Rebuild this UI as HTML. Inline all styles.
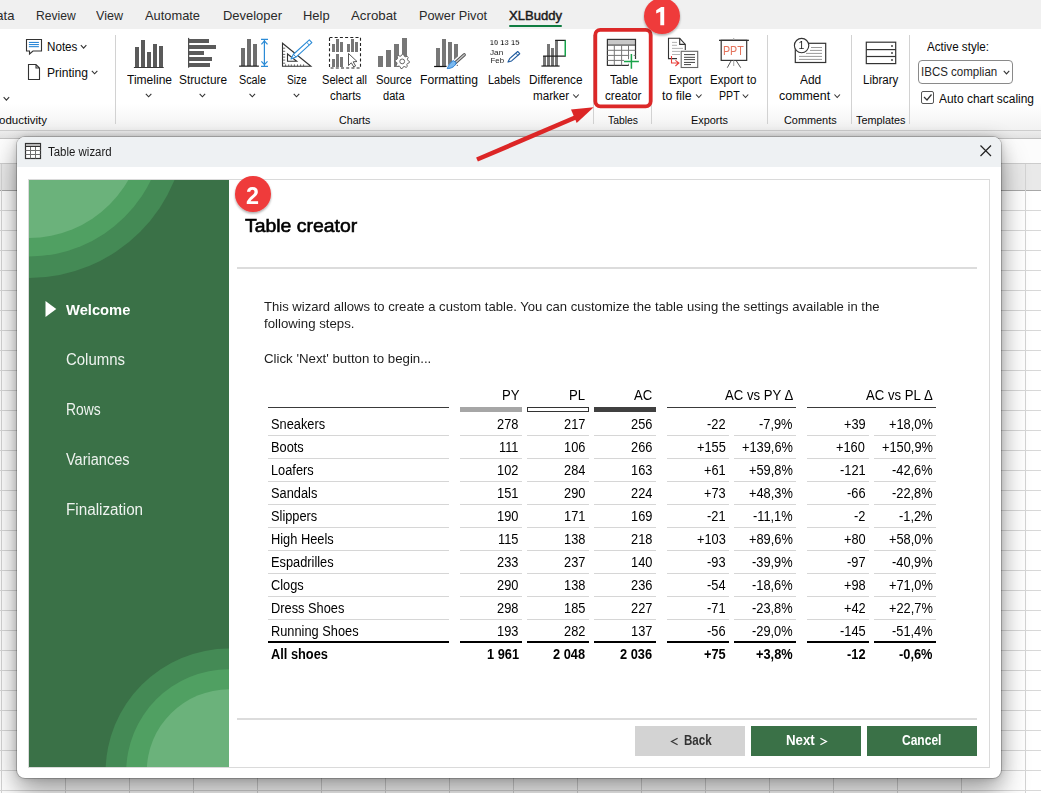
<!DOCTYPE html><html><head><meta charset="utf-8"><style>
html,body{margin:0;padding:0;}
body{width:1041px;height:793px;overflow:hidden;position:relative;background:#fff;font-family:"Liberation Sans",sans-serif;}
.t{position:absolute;white-space:nowrap;transform-origin:0 0;}
.a{position:absolute;}
</style></head><body>
<svg class="a" style="left:0;top:0" width="1041" height="793"><defs><linearGradient id="bandg" x1="0" y1="0" x2="0" y2="1"><stop offset="0" stop-color="#eeeeee"/><stop offset="1" stop-color="#e2e2e2"/></linearGradient></defs><rect x="0" y="130" width="1041" height="8" fill="url(#bandg)"/><rect x="0" y="130" width="1041" height="1" fill="#cdcdcd"/><rect x="0" y="138" width="1041" height="1" fill="#c0c0c0"/><rect x="0" y="139" width="1041" height="24" fill="#fcfcfc"/><rect x="0" y="163" width="1041" height="27" fill="#e9e9e9"/><rect x="0" y="163" width="1041" height="1" fill="#cccccc"/><rect x="0" y="190" width="1041" height="1" fill="#a8a8a8"/><rect x="1" y="164" width="1" height="629" fill="#d4d4d4"/><rect x="65" y="164" width="1" height="629" fill="#d4d4d4"/><rect x="129" y="164" width="1" height="629" fill="#d4d4d4"/><rect x="193" y="164" width="1" height="629" fill="#d4d4d4"/><rect x="257" y="164" width="1" height="629" fill="#d4d4d4"/><rect x="321" y="164" width="1" height="629" fill="#d4d4d4"/><rect x="385" y="164" width="1" height="629" fill="#d4d4d4"/><rect x="449" y="164" width="1" height="629" fill="#d4d4d4"/><rect x="513" y="164" width="1" height="629" fill="#d4d4d4"/><rect x="577" y="164" width="1" height="629" fill="#d4d4d4"/><rect x="641" y="164" width="1" height="629" fill="#d4d4d4"/><rect x="705" y="164" width="1" height="629" fill="#d4d4d4"/><rect x="769" y="164" width="1" height="629" fill="#d4d4d4"/><rect x="833" y="164" width="1" height="629" fill="#d4d4d4"/><rect x="897" y="164" width="1" height="629" fill="#d4d4d4"/><rect x="961" y="164" width="1" height="629" fill="#d4d4d4"/><rect x="1025" y="164" width="1" height="629" fill="#d4d4d4"/><rect x="0" y="210" width="1041" height="1" fill="#d8d8d8"/><rect x="0" y="230" width="1041" height="1" fill="#d8d8d8"/><rect x="0" y="250" width="1041" height="1" fill="#d8d8d8"/><rect x="0" y="270" width="1041" height="1" fill="#d8d8d8"/><rect x="0" y="290" width="1041" height="1" fill="#d8d8d8"/><rect x="0" y="310" width="1041" height="1" fill="#d8d8d8"/><rect x="0" y="330" width="1041" height="1" fill="#d8d8d8"/><rect x="0" y="350" width="1041" height="1" fill="#d8d8d8"/><rect x="0" y="370" width="1041" height="1" fill="#d8d8d8"/><rect x="0" y="390" width="1041" height="1" fill="#d8d8d8"/><rect x="0" y="410" width="1041" height="1" fill="#d8d8d8"/><rect x="0" y="430" width="1041" height="1" fill="#d8d8d8"/><rect x="0" y="450" width="1041" height="1" fill="#d8d8d8"/><rect x="0" y="470" width="1041" height="1" fill="#d8d8d8"/><rect x="0" y="490" width="1041" height="1" fill="#d8d8d8"/><rect x="0" y="510" width="1041" height="1" fill="#d8d8d8"/><rect x="0" y="530" width="1041" height="1" fill="#d8d8d8"/><rect x="0" y="550" width="1041" height="1" fill="#d8d8d8"/><rect x="0" y="570" width="1041" height="1" fill="#d8d8d8"/><rect x="0" y="590" width="1041" height="1" fill="#d8d8d8"/><rect x="0" y="610" width="1041" height="1" fill="#d8d8d8"/><rect x="0" y="630" width="1041" height="1" fill="#d8d8d8"/><rect x="0" y="650" width="1041" height="1" fill="#d8d8d8"/><rect x="0" y="670" width="1041" height="1" fill="#d8d8d8"/><rect x="0" y="690" width="1041" height="1" fill="#d8d8d8"/><rect x="0" y="710" width="1041" height="1" fill="#d8d8d8"/><rect x="0" y="730" width="1041" height="1" fill="#d8d8d8"/><rect x="0" y="750" width="1041" height="1" fill="#d8d8d8"/><rect x="0" y="770" width="1041" height="1" fill="#d8d8d8"/><rect x="0" y="790" width="1041" height="1" fill="#d8d8d8"/></svg>
<div class="a" style="left:0;top:0;width:1041px;height:29px;background:#f0f0f0"></div>
<div class="t" style="left:-13.10px;top:9px;font-size:13px;line-height:13px;color:#2a2a2a;">Data</div>
<div class="t" style="left:36.00px;top:9px;font-size:13px;line-height:13px;color:#2a2a2a;transform:scaleX(0.9321);">Review</div>
<div class="t" style="left:96.00px;top:9px;font-size:13px;line-height:13px;color:#2a2a2a;transform:scaleX(0.9643);">View</div>
<div class="t" style="left:145.00px;top:9px;font-size:13px;line-height:13px;color:#2a2a2a;transform:scaleX(0.9883);">Automate</div>
<div class="t" style="left:223.00px;top:9px;font-size:13px;line-height:13px;color:#2a2a2a;transform:scaleX(0.9958);">Developer</div>
<div class="t" style="left:303.00px;top:9px;font-size:13px;line-height:13px;color:#2a2a2a;transform:scaleX(0.9944);">Help</div>
<div class="t" style="left:351.00px;top:9px;font-size:13px;line-height:13px;color:#2a2a2a;transform:scaleX(1.0201);">Acrobat</div>
<div class="t" style="left:419.00px;top:9px;font-size:13px;line-height:13px;color:#2a2a2a;transform:scaleX(0.9805);">Power Pivot</div>
<div class="t" style="left:509.00px;top:9px;font-size:13px;line-height:13px;color:#1a1a1a;transform:scaleX(1.0047);-webkit-text-stroke:0.45px #1a1a1a;">XLBuddy</div>
<div class="a" style="left:509px;top:25px;width:53px;height:2px;background:#107c41;border-radius:1px"></div>
<div class="a" style="left:0;top:29px;width:1041px;height:101px;background:linear-gradient(#fff 0px,#fff 75px,#f2f2f2 101px)"></div>
<div class="a" style="left:115px;top:35px;width:1px;height:89px;background:#d2d2d2"></div>
<div class="a" style="left:593px;top:35px;width:1px;height:89px;background:#d2d2d2"></div>
<div class="a" style="left:651px;top:35px;width:1px;height:89px;background:#d2d2d2"></div>
<div class="a" style="left:767px;top:35px;width:1px;height:89px;background:#d2d2d2"></div>
<div class="a" style="left:851px;top:35px;width:1px;height:89px;background:#d2d2d2"></div>
<div class="a" style="left:909px;top:35px;width:1px;height:89px;background:#d2d2d2"></div>
<div class="t" style="left:-12.45px;top:115px;font-size:11.5px;line-height:11.5px;color:#0a0a0a;">Productivity</div>
<div class="t" style="left:338.80px;top:115px;font-size:11.5px;line-height:11.5px;color:#0a0a0a;transform:scaleX(0.9276);">Charts</div>
<div class="t" style="left:607.50px;top:115px;font-size:11.5px;line-height:11.5px;color:#0a0a0a;transform:scaleX(0.9023);">Tables</div>
<div class="t" style="left:691.40px;top:115px;font-size:11.5px;line-height:11.5px;color:#0a0a0a;transform:scaleX(0.9487);">Exports</div>
<div class="t" style="left:783.70px;top:115px;font-size:11.5px;line-height:11.5px;color:#0a0a0a;transform:scaleX(0.9460);">Comments</div>
<div class="t" style="left:856.05px;top:115px;font-size:11.5px;line-height:11.5px;color:#0a0a0a;transform:scaleX(0.9447);">Templates</div>
<div class="t" style="left:46.60px;top:41px;font-size:12.5px;line-height:12.5px;color:#0a0a0a;transform:scaleX(0.9311);">Notes</div>
<div class="t" style="left:46.60px;top:67px;font-size:12.5px;line-height:12.5px;color:#0a0a0a;transform:scaleX(0.9670);">Printing</div>
<div class="t" style="left:127.00px;top:74px;font-size:12.5px;line-height:12.5px;color:#0a0a0a;transform:scaleX(0.9626);">Timeline</div>
<div class="t" style="left:179.00px;top:74px;font-size:12.5px;line-height:12.5px;color:#0a0a0a;transform:scaleX(0.9467);">Structure</div>
<div class="t" style="left:238.80px;top:74px;font-size:12.5px;line-height:12.5px;color:#0a0a0a;transform:scaleX(0.8640);">Scale</div>
<div class="t" style="left:287.05px;top:74px;font-size:12.5px;line-height:12.5px;color:#0a0a0a;transform:scaleX(0.8107);">Size</div>
<div class="t" style="left:322.30px;top:74px;font-size:12.5px;line-height:12.5px;color:#0a0a0a;transform:scaleX(0.8876);">Select all</div>
<div class="t" style="left:329.70px;top:90px;font-size:12.5px;line-height:12.5px;color:#0a0a0a;transform:scaleX(0.9104);">charts</div>
<div class="t" style="left:376.35px;top:74px;font-size:12.5px;line-height:12.5px;color:#0a0a0a;transform:scaleX(0.9015);">Source</div>
<div class="t" style="left:382.80px;top:90px;font-size:12.5px;line-height:12.5px;color:#0a0a0a;transform:scaleX(0.8852);">data</div>
<div class="t" style="left:419.50px;top:74px;font-size:12.5px;line-height:12.5px;color:#0a0a0a;transform:scaleX(0.9707);">Formatting</div>
<div class="t" style="left:487.55px;top:74px;font-size:12.5px;line-height:12.5px;color:#0a0a0a;transform:scaleX(0.8765);">Labels</div>
<div class="t" style="left:529.45px;top:74px;font-size:12.5px;line-height:12.5px;color:#0a0a0a;transform:scaleX(0.9427);">Difference</div>
<div class="t" style="left:532.60px;top:90px;font-size:12.5px;line-height:12.5px;color:#0a0a0a;transform:scaleX(0.9306);">marker</div>
<div class="t" style="left:609.50px;top:74px;font-size:12.5px;line-height:12.5px;color:#0a0a0a;transform:scaleX(0.9365);">Table</div>
<div class="t" style="left:604.60px;top:90px;font-size:12.5px;line-height:12.5px;color:#0a0a0a;transform:scaleX(0.9357);">creator</div>
<div class="t" style="left:668.60px;top:74px;font-size:12.5px;line-height:12.5px;color:#0a0a0a;transform:scaleX(0.9018);">Export</div>
<div class="t" style="left:662.20px;top:90px;font-size:12.5px;line-height:12.5px;color:#0a0a0a;transform:scaleX(0.9900);">to file</div>
<div class="t" style="left:710.35px;top:74px;font-size:12.5px;line-height:12.5px;color:#0a0a0a;transform:scaleX(0.9260);">Export to</div>
<div class="t" style="left:718.80px;top:90px;font-size:12.5px;line-height:12.5px;color:#0a0a0a;transform:scaleX(0.8477);">PPT</div>
<div class="t" style="left:800.30px;top:74px;font-size:12.5px;line-height:12.5px;color:#0a0a0a;transform:scaleX(0.9528);">Add</div>
<div class="t" style="left:778.70px;top:90px;font-size:12.5px;line-height:12.5px;color:#0a0a0a;transform:scaleX(0.9942);">comment</div>
<div class="t" style="left:863.35px;top:74px;font-size:12.5px;line-height:12.5px;color:#0a0a0a;transform:scaleX(0.9241);">Library</div>
<div class="t" style="left:927.20px;top:41px;font-size:12.5px;line-height:12.5px;color:#0a0a0a;transform:scaleX(0.9295);">Active style:</div>
<div class="a" style="left:918px;top:60px;width:93px;height:22px;border:1px solid #8a8a8a;border-radius:4px;background:#fff"></div>
<div class="t" style="left:921.30px;top:66px;font-size:12.5px;line-height:12.5px;color:#262626;transform:scaleX(0.9220);">IBCS complian</div>
<div class="a" style="left:921px;top:91px;width:11px;height:11px;border:1px solid #555;border-radius:2px;background:#fff"></div>
<div class="t" style="left:939.20px;top:93px;font-size:12.5px;line-height:12.5px;color:#0a0a0a;transform:scaleX(0.9562);">Auto chart scaling</div>
<svg class="a" style="left:0;top:0;will-change:transform" width="1041" height="130"><path d="M80.85,45.1 L83.6,48.1 L86.35,45.1" fill="none" stroke="#333" stroke-width="1.1"/><path d="M91.85,70.8 L94.6,73.8 L97.35,70.8" fill="none" stroke="#333" stroke-width="1.1"/><path d="M3.6500000000000004,97.2 L6.4,100.2 L9.15,97.2" fill="none" stroke="#333" stroke-width="1.1"/><path d="M145.85,93.8 L148.6,96.8 L151.35,93.8" fill="none" stroke="#333" stroke-width="1.1"/><path d="M199.65,93.8 L202.4,96.8 L205.15,93.8" fill="none" stroke="#333" stroke-width="1.1"/><path d="M249.55,93.8 L252.3,96.8 L255.05,93.8" fill="none" stroke="#333" stroke-width="1.1"/><path d="M293.75,93.8 L296.5,96.8 L299.25,93.8" fill="none" stroke="#333" stroke-width="1.1"/><path d="M573.25,94.5 L576,97.5 L578.75,94.5" fill="none" stroke="#333" stroke-width="1.1"/><path d="M696.05,94.5 L698.8,97.5 L701.55,94.5" fill="none" stroke="#333" stroke-width="1.1"/><path d="M742.75,94.5 L745.5,97.5 L748.25,94.5" fill="none" stroke="#333" stroke-width="1.1"/><path d="M834.45,94.5 L837.2,97.5 L839.95,94.5" fill="none" stroke="#333" stroke-width="1.1"/><path d="M1003.75,70.9 L1006.5,73.9 L1009.25,70.9" fill="none" stroke="#333" stroke-width="1.1"/><path d="M924,97 L927,100 L931.5,94.5" fill="none" stroke="#333" stroke-width="1.2"/><path d="M26.5,39.5 H41.5 V51 H33 L29.5,54 V51 H26.5 Z" fill="#fff" stroke="#333" stroke-width="1.1"/><rect x="28.9" y="41.9" width="10" height="1.1" fill="#2b88d8"/><rect x="28.9" y="44.0" width="10" height="1.1" fill="#2b88d8"/><rect x="28.9" y="46.1" width="10" height="1.1" fill="#2b88d8"/><path d="M28.5,64.5 H36 L39.5,68 V79.5 H28.5 Z M36,64.5 V68 H39.5" fill="#fff" stroke="#333" stroke-width="1.1"/><rect x="135" y="47" width="4" height="21" fill="#5a5a5a"/><rect x="141" y="40" width="4" height="28" fill="#5a5a5a"/><rect x="147" y="52" width="4" height="16" fill="#5a5a5a"/><rect x="153" y="44" width="4" height="24" fill="#5a5a5a"/><rect x="159" y="46" width="4" height="22" fill="#5a5a5a"/><rect x="133.9" y="67" width="29.8" height="1" fill="#3a3a3a"/><rect x="188.1" y="37.9" width="1.1" height="29.8" fill="#3a3a3a"/><rect x="189" y="39" width="20" height="4" fill="#5a5a5a"/><rect x="189" y="45" width="27" height="4" fill="#5a5a5a"/><rect x="189" y="51" width="15" height="4" fill="#5a5a5a"/><rect x="189" y="57" width="23" height="4" fill="#5a5a5a"/><rect x="189" y="63" width="21" height="4" fill="#5a5a5a"/><rect x="241" y="48" width="4" height="18" fill="#6e6e6e"/><rect x="247" y="39" width="4" height="27" fill="#6e6e6e"/><rect x="253" y="44" width="4" height="22" fill="#6e6e6e"/><rect x="239.1" y="65.6" width="19.8" height="1.1" fill="#111"/><path d="M264.4,40 V66 M261,39.4 H268 M261,66.3 H268 M261.4,44.4 L264.4,40.9 L267.5,44.4 M261.4,61.3 L264.4,64.7 L267.5,61.3" fill="none" stroke="#2b8bd6" stroke-width="1.2"/><path d="M282.5,43.2 V66.3 H310.9 Z" fill="#fff" stroke="#333" stroke-width="1.1" stroke-linejoin="miter"/><path d="M287.5,54 V61.3 H296.7 Z" fill="none" stroke="#333" stroke-width="1.1"/><path d="M282.5,48.2 H285.2" stroke="#444" stroke-width="0.8"/><path d="M282.5,51.3 H285.2" stroke="#444" stroke-width="0.8"/><path d="M282.5,54.4 H285.2" stroke="#444" stroke-width="0.8"/><path d="M282.5,57.1 H285.2" stroke="#444" stroke-width="0.8"/><path d="M282.5,60.1 H285.2" stroke="#444" stroke-width="0.8"/><path d="M282.5,63.2 H285.2" stroke="#444" stroke-width="0.8"/><path d="M285.6,66.3 V64.4" stroke="#444" stroke-width="0.8"/><path d="M288.7,66.3 V64.4" stroke="#444" stroke-width="0.8"/><path d="M291.3,66.3 V64.4" stroke="#444" stroke-width="0.8"/><path d="M294.4,66.3 V64.4" stroke="#444" stroke-width="0.8"/><path d="M297.5,66.3 V64.4" stroke="#444" stroke-width="0.8"/><path d="M300.6,66.3 V64.4" stroke="#444" stroke-width="0.8"/><path d="M303.6,66.3 V64.4" stroke="#444" stroke-width="0.8"/><polygon points="291.00,59.00 295.98,57.06 311.87,42.71 309.33,39.89 293.44,54.24" fill="#fff" stroke="#2b8bd6" stroke-width="1.1" stroke-linejoin="round"/><path d="M309.28,45.06 L306.73,42.24 M295.98,57.06 L293.44,54.24" stroke="#2b8bd6" stroke-width="1"/><rect x="329.5" y="37.5" width="31" height="30.5" fill="none" stroke="#222" stroke-width="1.1" stroke-dasharray="3,2.2"/><rect x="332" y="44" width="3" height="8" fill="#777"/><rect x="336" y="39" width="3" height="13" fill="#777"/><rect x="340" y="42" width="3" height="10" fill="#777"/><rect x="347" y="44" width="3" height="8" fill="#777"/><rect x="351" y="39" width="3" height="13" fill="#777"/><rect x="355" y="42" width="3" height="10" fill="#777"/><rect x="332" y="59" width="3" height="8" fill="#777"/><rect x="336" y="54" width="3" height="13" fill="#777"/><rect x="340" y="57" width="3" height="10" fill="#777"/><path d="M348.5,53.5 L348.5,65.5 L351.3,62.8 L353.8,67 L355.6,66 L353.2,61.8 L357,61.5 Z" fill="#fff" stroke="#444" stroke-width="0.9"/><rect x="378" y="56" width="5" height="11" fill="#777"/><rect x="386" y="50" width="5" height="17" fill="#777"/><rect x="394" y="44" width="5" height="23" fill="#777"/><rect x="402" y="38" width="5" height="29" fill="#777"/><polygon points="409.40,61.40 409.26,62.80 407.37,63.54 406.86,64.51 407.29,66.49 406.20,67.39 404.34,66.57 403.29,66.89 402.20,68.60 400.80,68.46 400.06,66.57 399.09,66.06 397.11,66.49 396.21,65.40 397.03,63.54 396.71,62.49 395.00,61.40 395.14,60.00 397.03,59.26 397.54,58.29 397.11,56.31 398.20,55.41 400.06,56.23 401.11,55.91 402.20,54.20 403.60,54.34 404.34,56.23 405.31,56.74 407.29,56.31 408.19,57.40 407.37,59.26 407.69,60.31" fill="#fff" stroke="#666" stroke-width="1"/><circle cx="402.2" cy="61.4" r="2.4" fill="#fff" stroke="#666" stroke-width="1"/><rect x="436" y="48" width="4" height="18" fill="#777"/><rect x="442" y="39" width="4" height="27" fill="#777"/><rect x="448" y="42" width="4" height="24" fill="#777"/><rect x="454" y="44" width="4" height="22" fill="#777"/><rect x="434.1" y="65.9" width="14" height="1.2" fill="#111"/><path d="M468,51.5 L446,71" stroke="#fff" stroke-width="6"/><path d="M464.3,54.8 L455.6,62.5" stroke="#555" stroke-width="3.2" stroke-linecap="round"/><path d="M464.3,54.8 L455.6,62.5" stroke="#c8c8c8" stroke-width="1.3" stroke-linecap="round"/><path d="M456.2,62.5 C455.6,66.2 451.5,68.6 447.2,68.6 C448.6,65.8 450,62.4 453.2,60.6 Z" fill="#7ab8ee" stroke="#1f77d0" stroke-width="0.9"/><text x="489.8" y="44.6" font-family="Liberation Sans" font-weight="bold" font-size="7.3" textLength="29.6" lengthAdjust="spacingAndGlyphs" fill="#000" stroke="#fff" stroke-width="0.25">10 13 15</text><text x="490" y="54.7" font-family="Liberation Sans" font-size="7.4" textLength="13.2" lengthAdjust="spacingAndGlyphs" fill="#222">Jan</text><text x="490.6" y="63.4" font-family="Liberation Sans" font-size="7" textLength="13.4" lengthAdjust="spacingAndGlyphs" fill="#222">Feb</text><polygon points="508.00,62.10 511.61,60.90 519.70,53.72 517.70,51.48 509.62,58.65" fill="#fff" stroke="#1f5a9e" stroke-width="1.1" stroke-linejoin="round"/><path d="M517.83,55.38 L515.83,53.14" stroke="#1f5a9e" stroke-width="0.9"/><rect x="543" y="56" width="3" height="10" fill="#777"/><rect x="547" y="44" width="3" height="22" fill="#777"/><rect x="551" y="48" width="3" height="18" fill="#777"/><rect x="555" y="40" width="3" height="26" fill="#777"/><rect x="541.4" y="65.5" width="18.2" height="1.1" fill="#111"/><path d="M543.1,56.1 H565.8 M555.2,40.4 H565.8" fill="none" stroke="#222" stroke-width="1.1"/><rect x="564.5" y="40.4" width="1.5" height="15.7" fill="#16a34a"/><rect x="607.4" y="39.4" width="28.1" height="5.6" fill="#c8c8c8"/><rect x="607.4" y="39.4" width="28.1" height="26" fill="none" stroke="#333" stroke-width="1.2"/><rect x="607.4" y="44.6" width="28.1" height="1" fill="#333"/><rect x="613.8" y="45" width="1" height="20.4" fill="#777"/><rect x="621.1" y="45" width="1" height="20.4" fill="#777"/><rect x="628.0" y="45" width="1" height="20.4" fill="#777"/><rect x="607.4" y="49.8" width="28.1" height="1" fill="#777"/><rect x="607.4" y="54.9" width="28.1" height="1" fill="#777"/><rect x="607.4" y="59.9" width="28.1" height="1" fill="#777"/><rect x="628.9" y="59" width="8" height="8" fill="#fff"/><path d="M631.4,54.1 V68.7 M624,61.4 H638.9" stroke="#fff" stroke-width="4.5"/><path d="M631.4,54.1 V68.7 M624,61.4 H638.9" stroke="#1aa34a" stroke-width="1.5"/><path d="M677,58.6 H668.5 V38.3 H679.7 L685.3,44.4 V50" fill="none" stroke="#333" stroke-width="1.1"/><path d="M679.7,38.3 V44.4 H685.3" fill="none" stroke="#333" stroke-width="1.1"/><rect x="672" y="41.9" width="5" height="1" fill="#b4b4b4"/><rect x="672" y="44.8" width="5" height="1" fill="#b4b4b4"/><rect x="672" y="47.9" width="11" height="1" fill="#b4b4b4"/><rect x="672" y="50.9" width="8" height="1" fill="#b4b4b4"/><rect x="672" y="54.0" width="8" height="1" fill="#b4b4b4"/><rect x="681.2" y="51.3" width="16.5" height="16.2" fill="#fff" stroke="#666" stroke-width="1.1"/><rect x="684" y="54.0" width="11" height="1.1" fill="#555"/><rect x="684" y="56.8" width="11" height="1.1" fill="#555"/><rect x="684" y="59.0" width="11" height="1.1" fill="#555"/><rect x="684" y="61.9" width="11" height="1.1" fill="#555"/><rect x="684" y="64.0" width="7" height="1.1" fill="#555"/><path d="M671.5,56 V63 H678.9 M675.4,60.4 L678.9,63 L675.4,66" fill="none" stroke="#e8413c" stroke-width="1.1"/><rect x="721.2" y="40.3" width="25.5" height="20.1" fill="#fff" stroke="#333" stroke-width="1.2"/><rect x="719" y="39.7" width="29.9" height="1.3" fill="#333"/><path d="M733.7,38 V40 M733.7,60.4 V66" stroke="#aaa" stroke-width="1.1"/><path d="M731.1,60.8 L727.3,67.7 M736.3,60.8 L740.7,67.7" stroke="#444" stroke-width="0.9"/><text x="722.9" y="55.2" font-family="Liberation Sans" font-size="13" textLength="20.8" lengthAdjust="spacingAndGlyphs" fill="#e4735c">PPT</text><rect x="795.3" y="43.3" width="30.4" height="19.2" fill="#fff" stroke="#333" stroke-width="1.2"/><rect x="811" y="47.0" width="11" height="1" fill="#9a9a9a"/><rect x="810" y="49.9" width="12" height="1" fill="#9a9a9a"/><rect x="806" y="52.9" width="16" height="1" fill="#9a9a9a"/><rect x="799" y="55.9" width="23" height="1" fill="#9a9a9a"/><rect x="799" y="58.9" width="23" height="1" fill="#9a9a9a"/><circle cx="801.6" cy="45.6" r="7.2" fill="#fff" stroke="#333" stroke-width="1.1"/><text x="801.4" y="49.4" font-family="Liberation Sans" font-size="10.5" text-anchor="middle" fill="#222">1</text><rect x="866.3" y="42.2" width="29.4" height="21.4" fill="#fff" stroke="#333" stroke-width="1.2"/><rect x="866.3" y="49" width="29.4" height="1.2" fill="#333"/><rect x="866.3" y="55.9" width="29.4" height="1.2" fill="#333"/><rect x="891.1" y="45.1" width="1.8" height="1.8" fill="#555"/><rect x="891.1" y="52.1" width="1.8" height="1.8" fill="#555"/><rect x="891.1" y="59.1" width="1.8" height="1.8" fill="#555"/></svg>
<div class="a" style="left:17px;top:137px;width:984px;height:641px;border-radius:8px;box-shadow:0 18px 30px rgba(0,0,0,0.30),0 2px 20px rgba(0,0,0,0.18),0 0 7px rgba(0,0,0,0.14),0 0 0 1px rgba(0,0,0,0.2);background:#fff;overflow:hidden"><div class="a" style="left:0;top:0;width:984px;height:30px;background:#eef1f3"></div></div>
<svg class="a" style="left:0;top:130px" width="1041" height="40"><rect x="25.5" y="13.5" width="15" height="15" fill="#fff" stroke="#333" stroke-width="1.2"/><rect x="26" y="14" width="14" height="2.2" fill="#b8b8b8"/><path d="M30.5,16.5 V28.5 M35.5,16.5 V28.5 M25.5,20.5 H40.5 M25.5,24.5 H40.5" stroke="#707070" stroke-width="1"/><path d="M25.5,16.5 H40.5" stroke="#333" stroke-width="1"/><path d="M980.5,15.5 L991,26 M991,15.5 L980.5,26" stroke="#222" stroke-width="1.2"/></svg>
<div class="t" style="left:47.60px;top:146px;font-size:12.5px;line-height:12.5px;color:#1a1a1a;transform:scaleX(0.9165);">Table wizard</div>
<div class="a" style="left:28px;top:179px;width:960px;height:587px;border:1px solid #dadada"></div>
<svg class="a" style="left:29px;top:180px" width="200" height="587">
<defs><clipPath id="gc"><rect x="0" y="0" width="200" height="587"/></clipPath></defs>
<g clip-path="url(#gc)">
<rect x="0" y="0" width="200" height="587" fill="#3a7147"/>
<circle cx="0" cy="-59" r="157" fill="#448a55"/>
<circle cx="0" cy="-59" r="135.5" fill="#50a062"/>
<circle cx="0" cy="-56" r="114" fill="#6bb27b"/>
<circle cx="200" cy="592" r="123.4" fill="#448a55"/>
<circle cx="200" cy="592" r="102.8" fill="#50a062"/>
<circle cx="200" cy="591.5" r="82.2" fill="#6bb27b"/>
</g></svg>
<svg class="a" style="left:45px;top:300px" width="13" height="18"><path d="M0.5,0.9 L11.3,9 L0.5,17.1 Z" fill="#fff"/></svg>
<div class="t" style="left:66.40px;top:302px;font-size:15px;line-height:15px;font-weight:bold;color:#ffffff;transform:scaleX(0.9817);">Welcome</div>
<div class="t" style="left:66.30px;top:352px;font-size:16px;line-height:16px;color:#eef3ef;transform:scaleX(0.9343);">Columns</div>
<div class="t" style="left:66.30px;top:402px;font-size:16px;line-height:16px;color:#eef3ef;transform:scaleX(0.8675);">Rows</div>
<div class="t" style="left:66.30px;top:452px;font-size:16px;line-height:16px;color:#eef3ef;transform:scaleX(0.9078);">Variances</div>
<div class="t" style="left:66.30px;top:502px;font-size:16px;line-height:16px;color:#eef3ef;transform:scaleX(0.9524);">Finalization</div>
<div class="t" style="left:245.40px;top:216px;font-size:19px;line-height:19px;color:#000;transform:scaleX(1.0214);-webkit-text-stroke:0.6px #000;">Table creator</div>
<div class="a" style="left:237px;top:267px;width:740px;height:2px;background:#dcdcdc"></div>
<div class="t" style="left:263.60px;top:300px;font-size:13px;line-height:13px;color:#1e1e1e;transform:scaleX(1.0056);">This wizard allows to create a custom table. You can customize the table using the settings available in the</div>
<div class="t" style="left:263.60px;top:317px;font-size:13px;line-height:13px;color:#1e1e1e;transform:scaleX(1.0180);">following steps.</div>
<div class="t" style="left:263.60px;top:352px;font-size:13px;line-height:13px;color:#1e1e1e;transform:scaleX(1.0204);">Click &#x27;Next&#x27; button to begin...</div>
<svg class="a" style="left:0;top:0" width="1041" height="793"><rect x="268" y="407" width="181" height="1" fill="#3a3a3a"/><rect x="667" y="407" width="129" height="1" fill="#3a3a3a"/><rect x="807" y="407" width="129" height="1" fill="#3a3a3a"/><rect x="460" y="407" width="62" height="5" fill="#a6a6a6"/><rect x="527.5" y="407.5" width="61" height="4" fill="#fff" stroke="#333" stroke-width="1"/><rect x="594" y="407" width="62" height="5" fill="#404040"/><rect x="268" y="435" width="181" height="1" fill="#d6d6d6"/><rect x="460" y="435" width="62" height="1" fill="#d6d6d6"/><rect x="527" y="435" width="62" height="1" fill="#d6d6d6"/><rect x="594" y="435" width="62" height="1" fill="#d6d6d6"/><rect x="667" y="435" width="62" height="1" fill="#d6d6d6"/><rect x="734" y="435" width="62" height="1" fill="#d6d6d6"/><rect x="807" y="435" width="62" height="1" fill="#d6d6d6"/><rect x="874" y="435" width="62" height="1" fill="#d6d6d6"/><rect x="268" y="458" width="181" height="1" fill="#d6d6d6"/><rect x="460" y="458" width="62" height="1" fill="#d6d6d6"/><rect x="527" y="458" width="62" height="1" fill="#d6d6d6"/><rect x="594" y="458" width="62" height="1" fill="#d6d6d6"/><rect x="667" y="458" width="62" height="1" fill="#d6d6d6"/><rect x="734" y="458" width="62" height="1" fill="#d6d6d6"/><rect x="807" y="458" width="62" height="1" fill="#d6d6d6"/><rect x="874" y="458" width="62" height="1" fill="#d6d6d6"/><rect x="268" y="481" width="181" height="1" fill="#d6d6d6"/><rect x="460" y="481" width="62" height="1" fill="#d6d6d6"/><rect x="527" y="481" width="62" height="1" fill="#d6d6d6"/><rect x="594" y="481" width="62" height="1" fill="#d6d6d6"/><rect x="667" y="481" width="62" height="1" fill="#d6d6d6"/><rect x="734" y="481" width="62" height="1" fill="#d6d6d6"/><rect x="807" y="481" width="62" height="1" fill="#d6d6d6"/><rect x="874" y="481" width="62" height="1" fill="#d6d6d6"/><rect x="268" y="504" width="181" height="1" fill="#d6d6d6"/><rect x="460" y="504" width="62" height="1" fill="#d6d6d6"/><rect x="527" y="504" width="62" height="1" fill="#d6d6d6"/><rect x="594" y="504" width="62" height="1" fill="#d6d6d6"/><rect x="667" y="504" width="62" height="1" fill="#d6d6d6"/><rect x="734" y="504" width="62" height="1" fill="#d6d6d6"/><rect x="807" y="504" width="62" height="1" fill="#d6d6d6"/><rect x="874" y="504" width="62" height="1" fill="#d6d6d6"/><rect x="268" y="527" width="181" height="1" fill="#d6d6d6"/><rect x="460" y="527" width="62" height="1" fill="#d6d6d6"/><rect x="527" y="527" width="62" height="1" fill="#d6d6d6"/><rect x="594" y="527" width="62" height="1" fill="#d6d6d6"/><rect x="667" y="527" width="62" height="1" fill="#d6d6d6"/><rect x="734" y="527" width="62" height="1" fill="#d6d6d6"/><rect x="807" y="527" width="62" height="1" fill="#d6d6d6"/><rect x="874" y="527" width="62" height="1" fill="#d6d6d6"/><rect x="268" y="550" width="181" height="1" fill="#d6d6d6"/><rect x="460" y="550" width="62" height="1" fill="#d6d6d6"/><rect x="527" y="550" width="62" height="1" fill="#d6d6d6"/><rect x="594" y="550" width="62" height="1" fill="#d6d6d6"/><rect x="667" y="550" width="62" height="1" fill="#d6d6d6"/><rect x="734" y="550" width="62" height="1" fill="#d6d6d6"/><rect x="807" y="550" width="62" height="1" fill="#d6d6d6"/><rect x="874" y="550" width="62" height="1" fill="#d6d6d6"/><rect x="268" y="573" width="181" height="1" fill="#d6d6d6"/><rect x="460" y="573" width="62" height="1" fill="#d6d6d6"/><rect x="527" y="573" width="62" height="1" fill="#d6d6d6"/><rect x="594" y="573" width="62" height="1" fill="#d6d6d6"/><rect x="667" y="573" width="62" height="1" fill="#d6d6d6"/><rect x="734" y="573" width="62" height="1" fill="#d6d6d6"/><rect x="807" y="573" width="62" height="1" fill="#d6d6d6"/><rect x="874" y="573" width="62" height="1" fill="#d6d6d6"/><rect x="268" y="596" width="181" height="1" fill="#d6d6d6"/><rect x="460" y="596" width="62" height="1" fill="#d6d6d6"/><rect x="527" y="596" width="62" height="1" fill="#d6d6d6"/><rect x="594" y="596" width="62" height="1" fill="#d6d6d6"/><rect x="667" y="596" width="62" height="1" fill="#d6d6d6"/><rect x="734" y="596" width="62" height="1" fill="#d6d6d6"/><rect x="807" y="596" width="62" height="1" fill="#d6d6d6"/><rect x="874" y="596" width="62" height="1" fill="#d6d6d6"/><rect x="268" y="619" width="181" height="1" fill="#d6d6d6"/><rect x="460" y="619" width="62" height="1" fill="#d6d6d6"/><rect x="527" y="619" width="62" height="1" fill="#d6d6d6"/><rect x="594" y="619" width="62" height="1" fill="#d6d6d6"/><rect x="667" y="619" width="62" height="1" fill="#d6d6d6"/><rect x="734" y="619" width="62" height="1" fill="#d6d6d6"/><rect x="807" y="619" width="62" height="1" fill="#d6d6d6"/><rect x="874" y="619" width="62" height="1" fill="#d6d6d6"/><rect x="268" y="641" width="181" height="2" fill="#000"/><rect x="460" y="641" width="62" height="2" fill="#000"/><rect x="527" y="641" width="62" height="2" fill="#000"/><rect x="594" y="641" width="62" height="2" fill="#000"/><rect x="667" y="641" width="62" height="2" fill="#000"/><rect x="734" y="641" width="62" height="2" fill="#000"/><rect x="807" y="641" width="62" height="2" fill="#000"/><rect x="874" y="641" width="62" height="2" fill="#000"/></svg>
<div class="t" style="left:501.58px;top:388px;font-size:14px;line-height:14px;color:#000;transform:scaleX(0.9371);">PY</div>
<div class="t" style="left:569.14px;top:388px;font-size:14px;line-height:14px;color:#000;transform:scaleX(0.9391);">PL</div>
<div class="t" style="left:634.27px;top:388px;font-size:14px;line-height:14px;color:#000;transform:scaleX(0.9373);">AC</div>
<div class="t" style="left:724.52px;top:388px;font-size:14px;line-height:14px;color:#000;transform:scaleX(0.9380);">AC vs PY Δ</div>
<div class="t" style="left:866.34px;top:388px;font-size:14px;line-height:14px;color:#000;transform:scaleX(0.9382);">AC vs PL Δ</div>
<div class="t" style="left:270.60px;top:417px;font-size:14px;line-height:14px;color:#000;transform:scaleX(0.9142);">Sneakers</div>
<div class="t" style="left:497.33px;top:417px;font-size:14px;line-height:14px;color:#000;transform:scaleX(0.9154);">278</div>
<div class="t" style="left:563.83px;top:417px;font-size:14px;line-height:14px;color:#000;transform:scaleX(0.9154);">217</div>
<div class="t" style="left:631.03px;top:417px;font-size:14px;line-height:14px;color:#000;transform:scaleX(0.9154);">256</div>
<div class="t" style="left:707.48px;top:417px;font-size:14px;line-height:14px;color:#000;transform:scaleX(0.9145);">-22</div>
<div class="t" style="left:759.06px;top:417px;font-size:14px;line-height:14px;color:#000;transform:scaleX(0.9149);">-7,9%</div>
<div class="t" style="left:843.58px;top:417px;font-size:14px;line-height:14px;color:#000;transform:scaleX(0.9145);">+39</div>
<div class="t" style="left:888.72px;top:417px;font-size:14px;line-height:14px;color:#000;transform:scaleX(0.9150);">+18,0%</div>
<div class="t" style="left:270.60px;top:440px;font-size:14px;line-height:14px;color:#000;transform:scaleX(0.9148);">Boots</div>
<div class="t" style="left:499.25px;top:440px;font-size:14px;line-height:14px;color:#000;transform:scaleX(0.9133);">111</div>
<div class="t" style="left:563.83px;top:440px;font-size:14px;line-height:14px;color:#000;transform:scaleX(0.9154);">106</div>
<div class="t" style="left:631.03px;top:440px;font-size:14px;line-height:14px;color:#000;transform:scaleX(0.9154);">266</div>
<div class="t" style="left:697.14px;top:440px;font-size:14px;line-height:14px;color:#000;transform:scaleX(0.9148);">+155</div>
<div class="t" style="left:741.58px;top:440px;font-size:14px;line-height:14px;color:#000;transform:scaleX(0.9151);">+139,6%</div>
<div class="t" style="left:836.44px;top:440px;font-size:14px;line-height:14px;color:#000;transform:scaleX(0.9148);">+160</div>
<div class="t" style="left:881.58px;top:440px;font-size:14px;line-height:14px;color:#000;transform:scaleX(0.9151);">+150,9%</div>
<div class="t" style="left:270.60px;top:463px;font-size:14px;line-height:14px;color:#000;transform:scaleX(0.9143);">Loafers</div>
<div class="t" style="left:497.33px;top:463px;font-size:14px;line-height:14px;color:#000;transform:scaleX(0.9154);">102</div>
<div class="t" style="left:563.83px;top:463px;font-size:14px;line-height:14px;color:#000;transform:scaleX(0.9154);">284</div>
<div class="t" style="left:631.03px;top:463px;font-size:14px;line-height:14px;color:#000;transform:scaleX(0.9154);">163</div>
<div class="t" style="left:704.28px;top:463px;font-size:14px;line-height:14px;color:#000;transform:scaleX(0.9145);">+61</div>
<div class="t" style="left:748.72px;top:463px;font-size:14px;line-height:14px;color:#000;transform:scaleX(0.9150);">+59,8%</div>
<div class="t" style="left:839.69px;top:463px;font-size:14px;line-height:14px;color:#000;transform:scaleX(0.9146);">-121</div>
<div class="t" style="left:891.92px;top:463px;font-size:14px;line-height:14px;color:#000;transform:scaleX(0.9150);">-42,6%</div>
<div class="t" style="left:270.60px;top:486px;font-size:14px;line-height:14px;color:#000;transform:scaleX(0.9149);">Sandals</div>
<div class="t" style="left:497.33px;top:486px;font-size:14px;line-height:14px;color:#000;transform:scaleX(0.9154);">151</div>
<div class="t" style="left:563.83px;top:486px;font-size:14px;line-height:14px;color:#000;transform:scaleX(0.9154);">290</div>
<div class="t" style="left:631.03px;top:486px;font-size:14px;line-height:14px;color:#000;transform:scaleX(0.9154);">224</div>
<div class="t" style="left:704.28px;top:486px;font-size:14px;line-height:14px;color:#000;transform:scaleX(0.9145);">+73</div>
<div class="t" style="left:748.72px;top:486px;font-size:14px;line-height:14px;color:#000;transform:scaleX(0.9150);">+48,3%</div>
<div class="t" style="left:846.78px;top:486px;font-size:14px;line-height:14px;color:#000;transform:scaleX(0.9145);">-66</div>
<div class="t" style="left:891.92px;top:486px;font-size:14px;line-height:14px;color:#000;transform:scaleX(0.9150);">-22,8%</div>
<div class="t" style="left:270.60px;top:509px;font-size:14px;line-height:14px;color:#000;transform:scaleX(0.9139);">Slippers</div>
<div class="t" style="left:497.33px;top:509px;font-size:14px;line-height:14px;color:#000;transform:scaleX(0.9154);">190</div>
<div class="t" style="left:563.83px;top:509px;font-size:14px;line-height:14px;color:#000;transform:scaleX(0.9154);">171</div>
<div class="t" style="left:631.03px;top:509px;font-size:14px;line-height:14px;color:#000;transform:scaleX(0.9154);">169</div>
<div class="t" style="left:707.48px;top:509px;font-size:14px;line-height:14px;color:#000;transform:scaleX(0.9145);">-21</div>
<div class="t" style="left:752.90px;top:509px;font-size:14px;line-height:14px;color:#000;transform:scaleX(0.9145);">-11,1%</div>
<div class="t" style="left:853.92px;top:509px;font-size:14px;line-height:14px;color:#000;transform:scaleX(0.9138);">-2</div>
<div class="t" style="left:899.06px;top:509px;font-size:14px;line-height:14px;color:#000;transform:scaleX(0.9149);">-1,2%</div>
<div class="t" style="left:270.60px;top:532px;font-size:14px;line-height:14px;color:#000;transform:scaleX(0.9152);">High Heels</div>
<div class="t" style="left:498.31px;top:532px;font-size:14px;line-height:14px;color:#000;transform:scaleX(0.9143);">115</div>
<div class="t" style="left:563.83px;top:532px;font-size:14px;line-height:14px;color:#000;transform:scaleX(0.9154);">138</div>
<div class="t" style="left:631.03px;top:532px;font-size:14px;line-height:14px;color:#000;transform:scaleX(0.9154);">218</div>
<div class="t" style="left:697.14px;top:532px;font-size:14px;line-height:14px;color:#000;transform:scaleX(0.9148);">+103</div>
<div class="t" style="left:748.72px;top:532px;font-size:14px;line-height:14px;color:#000;transform:scaleX(0.9150);">+89,6%</div>
<div class="t" style="left:843.58px;top:532px;font-size:14px;line-height:14px;color:#000;transform:scaleX(0.9145);">+80</div>
<div class="t" style="left:888.72px;top:532px;font-size:14px;line-height:14px;color:#000;transform:scaleX(0.9150);">+58,0%</div>
<div class="t" style="left:270.60px;top:555px;font-size:14px;line-height:14px;color:#000;transform:scaleX(0.9145);">Espadrilles</div>
<div class="t" style="left:497.33px;top:555px;font-size:14px;line-height:14px;color:#000;transform:scaleX(0.9154);">233</div>
<div class="t" style="left:563.83px;top:555px;font-size:14px;line-height:14px;color:#000;transform:scaleX(0.9154);">237</div>
<div class="t" style="left:631.03px;top:555px;font-size:14px;line-height:14px;color:#000;transform:scaleX(0.9154);">140</div>
<div class="t" style="left:707.48px;top:555px;font-size:14px;line-height:14px;color:#000;transform:scaleX(0.9145);">-93</div>
<div class="t" style="left:751.92px;top:555px;font-size:14px;line-height:14px;color:#000;transform:scaleX(0.9150);">-39,9%</div>
<div class="t" style="left:846.78px;top:555px;font-size:14px;line-height:14px;color:#000;transform:scaleX(0.9145);">-97</div>
<div class="t" style="left:891.92px;top:555px;font-size:14px;line-height:14px;color:#000;transform:scaleX(0.9150);">-40,9%</div>
<div class="t" style="left:270.60px;top:578px;font-size:14px;line-height:14px;color:#000;transform:scaleX(0.9148);">Clogs</div>
<div class="t" style="left:497.33px;top:578px;font-size:14px;line-height:14px;color:#000;transform:scaleX(0.9154);">290</div>
<div class="t" style="left:563.83px;top:578px;font-size:14px;line-height:14px;color:#000;transform:scaleX(0.9154);">138</div>
<div class="t" style="left:631.03px;top:578px;font-size:14px;line-height:14px;color:#000;transform:scaleX(0.9154);">236</div>
<div class="t" style="left:707.48px;top:578px;font-size:14px;line-height:14px;color:#000;transform:scaleX(0.9145);">-54</div>
<div class="t" style="left:751.92px;top:578px;font-size:14px;line-height:14px;color:#000;transform:scaleX(0.9150);">-18,6%</div>
<div class="t" style="left:843.58px;top:578px;font-size:14px;line-height:14px;color:#000;transform:scaleX(0.9145);">+98</div>
<div class="t" style="left:888.72px;top:578px;font-size:14px;line-height:14px;color:#000;transform:scaleX(0.9150);">+71,0%</div>
<div class="t" style="left:270.60px;top:601px;font-size:14px;line-height:14px;color:#000;transform:scaleX(0.9143);">Dress Shoes</div>
<div class="t" style="left:497.33px;top:601px;font-size:14px;line-height:14px;color:#000;transform:scaleX(0.9154);">298</div>
<div class="t" style="left:563.83px;top:601px;font-size:14px;line-height:14px;color:#000;transform:scaleX(0.9154);">185</div>
<div class="t" style="left:631.03px;top:601px;font-size:14px;line-height:14px;color:#000;transform:scaleX(0.9154);">227</div>
<div class="t" style="left:707.48px;top:601px;font-size:14px;line-height:14px;color:#000;transform:scaleX(0.9145);">-71</div>
<div class="t" style="left:751.92px;top:601px;font-size:14px;line-height:14px;color:#000;transform:scaleX(0.9150);">-23,8%</div>
<div class="t" style="left:843.58px;top:601px;font-size:14px;line-height:14px;color:#000;transform:scaleX(0.9145);">+42</div>
<div class="t" style="left:888.72px;top:601px;font-size:14px;line-height:14px;color:#000;transform:scaleX(0.9150);">+22,7%</div>
<div class="t" style="left:270.60px;top:624px;font-size:14px;line-height:14px;color:#000;transform:scaleX(0.9145);">Running Shoes</div>
<div class="t" style="left:497.33px;top:624px;font-size:14px;line-height:14px;color:#000;transform:scaleX(0.9154);">193</div>
<div class="t" style="left:563.83px;top:624px;font-size:14px;line-height:14px;color:#000;transform:scaleX(0.9154);">282</div>
<div class="t" style="left:631.03px;top:624px;font-size:14px;line-height:14px;color:#000;transform:scaleX(0.9154);">137</div>
<div class="t" style="left:707.48px;top:624px;font-size:14px;line-height:14px;color:#000;transform:scaleX(0.9145);">-56</div>
<div class="t" style="left:751.92px;top:624px;font-size:14px;line-height:14px;color:#000;transform:scaleX(0.9150);">-29,0%</div>
<div class="t" style="left:839.69px;top:624px;font-size:14px;line-height:14px;color:#000;transform:scaleX(0.9146);">-145</div>
<div class="t" style="left:891.92px;top:624px;font-size:14px;line-height:14px;color:#000;transform:scaleX(0.9150);">-51,4%</div>
<div class="t" style="left:270.60px;top:647px;font-size:14px;line-height:14px;font-weight:bold;color:#000;transform:scaleX(0.9146);">All shoes</div>
<div class="t" style="left:486.64px;top:647px;font-size:14px;line-height:14px;font-weight:bold;color:#000;transform:scaleX(0.9147);">1 961</div>
<div class="t" style="left:553.14px;top:647px;font-size:14px;line-height:14px;font-weight:bold;color:#000;transform:scaleX(0.9147);">2 048</div>
<div class="t" style="left:620.34px;top:647px;font-size:14px;line-height:14px;font-weight:bold;color:#000;transform:scaleX(0.9147);">2 036</div>
<div class="t" style="left:704.28px;top:647px;font-size:14px;line-height:14px;font-weight:bold;color:#000;transform:scaleX(0.9145);">+75</div>
<div class="t" style="left:755.86px;top:647px;font-size:14px;line-height:14px;font-weight:bold;color:#000;transform:scaleX(0.9138);">+3,8%</div>
<div class="t" style="left:846.78px;top:647px;font-size:14px;line-height:14px;font-weight:bold;color:#000;transform:scaleX(0.9145);">-12</div>
<div class="t" style="left:899.06px;top:647px;font-size:14px;line-height:14px;font-weight:bold;color:#000;transform:scaleX(0.9149);">-0,6%</div>
<div class="a" style="left:237px;top:718px;width:740px;height:2px;background:#dcdcdc"></div>
<div class="a" style="left:635px;top:726px;width:110px;height:30px;background:#d3d3d3"></div>
<div class="a" style="left:751px;top:726px;width:110px;height:30px;background:#3a7147"></div>
<div class="a" style="left:867px;top:726px;width:110px;height:30px;background:#3a7147"></div>
<div class="t" style="left:683.80px;top:733px;font-size:14px;line-height:14px;font-weight:bold;color:#333;transform:scaleX(0.8269);">Back</div>
<svg class="a" style="left:0;top:0" width="1041" height="793"><path d="M677.6,738.2 L671.6,741.5 L677.6,744.8" fill="none" stroke="#3a3a3a" stroke-width="1.3"/><path d="M820.4,738.2 L826.4,741.5 L820.4,744.8" fill="none" stroke="#fff" stroke-width="1.3"/></svg>
<div class="t" style="left:786.30px;top:733px;font-size:14px;line-height:14px;font-weight:bold;color:#fff;transform:scaleX(0.9489);">Next</div>
<div class="t" style="left:901.80px;top:733px;font-size:14px;line-height:14px;font-weight:bold;color:#fff;transform:scaleX(0.8584);">Cancel</div>
<svg class="a" style="left:0;top:0" width="1041" height="793">
<defs><filter id="sh" x="-30%" y="-30%" width="160%" height="160%"><feDropShadow dx="0" dy="1.5" stdDeviation="1.2" flood-color="#000" flood-opacity="0.35"/></filter></defs>
<rect x="595.3" y="29.9" width="55.4" height="76.4" rx="5" fill="none" stroke="#dc2828" stroke-width="3.8"/>
<path d="M477,159.5 L580,115.5" stroke="#dc2626" stroke-width="4.6" stroke-linecap="butt"/>
<path d="M593.7,107.2 L571,109.4 L576.7,123 Z" fill="#dc2626"/>
<circle cx="662" cy="16" r="18" fill="#ef3b3b" filter="url(#sh)"/>
<path d="M664.2,7.1 V25.2 H660.3 V11.8 L656.2,13.6 V10.3 L661.2,7.1 Z" fill="#fff"/>
<circle cx="253" cy="194" r="18" fill="#ef3b3b" filter="url(#sh)"/>
</svg>
<div class="t" style="left:246.00px;top:184px;font-size:24px;line-height:24px;font-weight:bold;color:#fff;transform:scaleX(0.9738);">2</div>
</body></html>
